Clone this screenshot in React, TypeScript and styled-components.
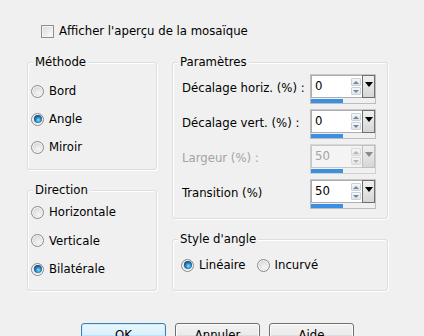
import * as React from 'react';
import styled, { createGlobalStyle } from 'styled-components';

const GlobalStyle = createGlobalStyle`
  html, body {
    margin: 0;
    padding: 0;
    background: #f0f0f0;
  }
  body {
    font-family: "DejaVu Sans Condensed", "DejaVu Sans", sans-serif;
    font-size: 13px;
    color: #000;
  }
`;

const Dialog = styled.div`
  width: 424px;
  height: 336px;
  overflow: hidden;
  box-sizing: border-box;
  padding-top: 24px;
  background: #f0f0f0;
  display: flex;
  flex-direction: column;
`;

const CheckRow = styled.label`
  display: flex;
  align-items: center;
  gap: 5px;
  height: 14px;
  padding-left: 41px;
  line-height: 14px;
`;

const CheckBox = styled.span`
  width: 13px;
  height: 13px;
  box-sizing: border-box;
  border: 1px solid #8f8f8f;
  background: linear-gradient(135deg, #d8d8d8 0%, #eeeeee 60%, #ffffff 100%);
  box-shadow: inset 0 0 0 1px #f4f4f4;
`;

const Columns = styled.div`
  display: flex;
  gap: 15px;
  padding-left: 27px;
  margin-top: 24px;
`;

const Column = styled.div<{ $width: number }>`
  display: flex;
  flex-direction: column;
  gap: 20px;
  width: ${(p) => p.$width}px;
`;

const Group = styled.div<{ $height: number; $padTop: number; $gap: number }>`
  position: relative;
  box-sizing: border-box;
  height: ${(p) => p.$height}px;
  border: 1px solid #d5dfe5;
  border-radius: 3px;
  box-shadow: inset 1px 1px 0 #ffffff, 1px 1px 0 #ffffff;
  padding-top: ${(p) => p.$padTop}px;
  display: flex;
  flex-direction: column;
  gap: ${(p) => p.$gap}px;
`;

const Legend = styled.span`
  position: absolute;
  top: -8px;
  left: 5px;
  padding: 0 2px;
  background: #f0f0f0;
  line-height: 14px;
`;

const RadioRow = styled.label`
  display: flex;
  align-items: center;
  gap: 5px;
  height: 14px;
  line-height: 14px;
  padding-left: 3px;
`;

const InlineRadios = styled.div`
  display: flex;
  align-items: center;
  gap: 8px;
  padding-left: 5px;
`;

const Radio = styled.span<{ $checked?: boolean }>`
  position: relative;
  flex: none;
  width: 13px;
  height: 13px;
  box-sizing: border-box;
  border-radius: 50%;
  border: 1px solid #8b8b8b;
  background: radial-gradient(circle at 60% 65%, #f6f6f6 0%, #e2e2e2 45%, #c8c8c8 100%);
  box-shadow: inset 0 0 0 1px #f8f8f8;

  &::after {
    content: '';
    display: ${(p) => (p.$checked ? 'block' : 'none')};
    position: absolute;
    left: 1.5px;
    top: 1.5px;
    width: 8px;
    height: 8px;
    border-radius: 50%;
    background: radial-gradient(circle at 55% 62%, #9ae8ff 0%, #2f8fcc 35%, #0d3e70 75%, #08284a 100%);
  }
`;

const ParamRow = styled.div<{ $disabled?: boolean }>`
  display: grid;
  grid-template-columns: 128px 66px;
  padding-left: 9px;
  color: ${(p) => (p.$disabled ? '#a3a3a3' : '#000')};
`;

const ParamLabel = styled.span`
  padding-top: 7px;
  line-height: 14px;
  white-space: nowrap;
`;

const Spin = styled.div<{ $disabled?: boolean }>`
  width: 66px;
  height: 30px;
  box-sizing: border-box;
  border: 1px solid ${(p) => (p.$disabled ? '#d0d0d0' : '#bcbcbc')};
  border-top-color: ${(p) => (p.$disabled ? '#d8d8d8' : '#c8c8c8')};
  display: grid;
  grid-template-columns: 1fr 13px;
  grid-template-rows: 23px 1fr;
`;

const Field = styled.div<{ $disabled?: boolean }>`
  display: flex;
  background: ${(p) => (p.$disabled ? '#f4f4f4' : '#ffffff')};
  border: 1px solid ${(p) => (p.$disabled ? '#c8c8c8' : '#abadb3')};
  border-right: none;
`;

const Value = styled.span<{ $disabled?: boolean }>`
  flex: 1;
  padding: 3px 0 0 3px;
  line-height: 14px;
  color: ${(p) => (p.$disabled ? '#a3a3a3' : '#000')};
`;

const Arrows = styled.div`
  width: 10px;
  display: flex;
  flex-direction: column;
  gap: 1px;
  padding: 2px 1px 2px 0;
`;

const ArrowBtn = styled.div<{ $down?: boolean; $disabled?: boolean }>`
  flex: 1;
  border: 1px solid ${(p) => (p.$disabled ? '#dadada' : '#c9d0d8')};
  border-radius: 1px;
  background: linear-gradient(#f6f6f6, #e1e4e8);
  display: flex;
  align-items: center;
  justify-content: center;

  &::after {
    content: '';
    border-left: 3px solid transparent;
    border-right: 3px solid transparent;
    ${(p) => (p.$down ? 'border-top' : 'border-bottom')}: 3px solid ${(p) => (p.$disabled ? '#b4b4b4' : '#6e86a8')};
  }
`;

const DropBtn = styled.div<{ $disabled?: boolean }>`
  box-sizing: border-box;
  border: 1px solid ${(p) => (p.$disabled ? '#bfbfbf' : '#6f6f6f')};
  background: linear-gradient(#f0f0f0, #d6d6d6);
  display: flex;
  justify-content: center;
  padding-top: 6px;

  &::after {
    content: '';
    height: 0;
    border-left: 4px solid transparent;
    border-right: 4px solid transparent;
    border-top: 5px solid ${(p) => (p.$disabled ? '#8a8a8a' : '#000')};
  }
`;

const BarTrack = styled.div`
  grid-column: 1 / span 2;
  background: #f0f0f0;
  display: flex;
  align-items: center;
`;

const Bar = styled.div`
  height: 4px;
  background: #3c8ee2;
  margin-top: 1px;
`;

const Buttons = styled.div`
  display: flex;
  gap: 9px;
  padding-left: 81px;
  margin-top: 32px;
`;

const Button = styled.button<{ $default?: boolean }>`
  width: 85px;
  height: 23px;
  box-sizing: border-box;
  border-radius: 3px;
  font: inherit;
  color: #000;
  padding: 0;
  border: 1px solid ${(p) => (p.$default ? '#3c7fb1' : '#707070')};
  background: ${(p) =>
    p.$default
      ? 'linear-gradient(#eaf6fd 0%, #d9f0fc 50%, #bee6fd 51%, #a7d9f5 100%)'
      : 'linear-gradient(#f2f2f2 0%, #ebebeb 50%, #dddddd 51%, #cfcfcf 100%)'};
  box-shadow: inset 0 0 0 1px ${(p) => (p.$default ? '#c9eefc' : '#fcfcfc')};
`;

type SpinProps = { label: string; value: string; disabled?: boolean };

const SpinRow: React.FC<SpinProps> = ({ label, value, disabled }) => (
  <ParamRow $disabled={disabled}>
    <ParamLabel>{label}</ParamLabel>
    <Spin $disabled={disabled}>
      <Field $disabled={disabled}>
        <Value $disabled={disabled}>{value}</Value>
        <Arrows>
          <ArrowBtn $disabled={disabled} />
          <ArrowBtn $down $disabled={disabled} />
        </Arrows>
      </Field>
      <DropBtn $disabled={disabled} />
      <BarTrack>
        <Bar style={{ width: 32 }} />
      </BarTrack>
    </Spin>
  </ParamRow>
);

const App: React.FC = () => (
  <Dialog>
    <GlobalStyle />
    <CheckRow>
      <CheckBox />
      <span>Afficher l'aperçu de la mosaïque</span>
    </CheckRow>

    <Columns>
      <Column $width={130}>
        <Group $height={108} $padTop={21} $gap={14}>
          <Legend>Méthode</Legend>
          <RadioRow><Radio />Bord</RadioRow>
          <RadioRow><Radio $checked />Angle</RadioRow>
          <RadioRow><Radio />Miroir</RadioRow>
        </Group>
        <Group $height={101} $padTop={14} $gap={14.5}>
          <Legend>Direction</Legend>
          <RadioRow><Radio />Horizontale</RadioRow>
          <RadioRow><Radio />Verticale</RadioRow>
          <RadioRow><Radio $checked />Bilatérale</RadioRow>
        </Group>
      </Column>

      <Column $width={216}>
        <Group $height={157} $padTop={11} $gap={5}>
          <Legend>Paramètres</Legend>
          <SpinRow label="Décalage horiz. (%) :" value="0" />
          <SpinRow label="Décalage vert. (%) :" value="0" />
          <SpinRow label="Largeur (%) :" value="50" disabled />
          <SpinRow label="Transition (%)" value="50" />
        </Group>
        <Group $height={52} $padTop={18} $gap={0}>
          <Legend>Style d'angle</Legend>
          <InlineRadios>
            <RadioRow as="span"><Radio $checked />Linéaire</RadioRow>
            <RadioRow as="span"><Radio />Incurvé</RadioRow>
          </InlineRadios>
        </Group>
      </Column>
    </Columns>

    <Buttons>
      <Button $default>OK</Button>
      <Button>Annuler</Button>
      <Button>Aide</Button>
    </Buttons>
  </Dialog>
);

export default App;
